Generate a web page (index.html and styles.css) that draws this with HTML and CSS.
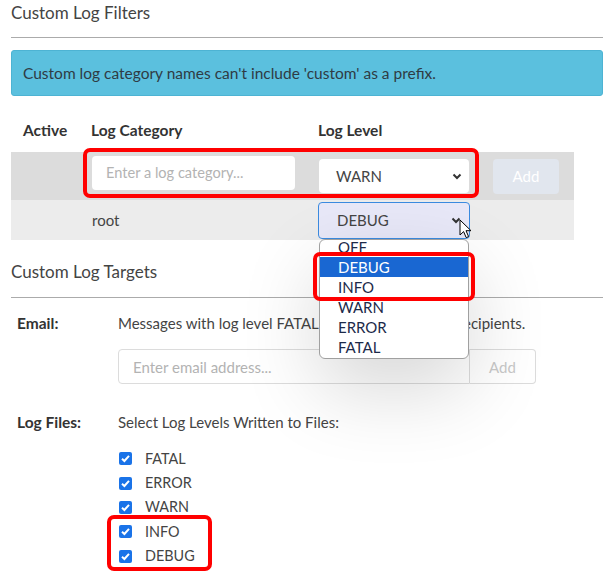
FILE: index.html
```html
<!DOCTYPE html>
<html>
<head>
<meta charset="utf-8">
<link rel="stylesheet" href="styles.css">
</head>
<body>
<div class="page">
  <div class="section-title">Custom Log Filters</div>
  <div class="alert">Custom log category names can't include 'custom' as a prefix.</div>

  <div class="filters">
    <div class="frow head">
      <div class="cell">Active</div>
      <div class="cell">Log Category</div>
      <div class="cell">Log Level</div>
      <div class="cell"></div>
    </div>
    <div class="frow new-row">
      <div class="cell"></div>
      <div class="cell"><div class="text-input">Enter a log category...</div></div>
      <div class="cell">
        <div class="select">
          <span>WARN</span>
          <svg class="chev" width="10" height="7" viewBox="0 0 10 7"><path d="M1.5 1.5 L5 5 L8.5 1.5" fill="none" stroke="#333" stroke-width="2"/></svg>
        </div>
      </div>
      <div class="cell"><div class="btn-add">Add</div></div>
    </div>
    <div class="frow existing">
      <div class="cell"></div>
      <div class="cell root">root</div>
      <div class="cell">
        <div class="select open">
          <span>DEBUG</span>
          <svg class="chev" width="10" height="7" viewBox="0 0 10 7"><path d="M1.5 1.5 L5 5 L8.5 1.5" fill="none" stroke="#333" stroke-width="2"/></svg>
          <div class="dropdown">
            <div class="options">
              <div class="opt">OFF</div>
              <div class="opt sel">DEBUG</div>
              <div class="opt">INFO</div>
              <div class="opt">WARN</div>
              <div class="opt">ERROR</div>
              <div class="opt">FATAL</div>
            </div>
          </div>
          <svg class="cursor" width="14" height="21" viewBox="0 0 14 21"><path d="M1 1 L1 16 L4.6 12.6 L7.2 18.6 L9.6 17.6 L7 11.7 L12 11.7 Z" fill="#fff" stroke="#000" stroke-width="1" stroke-linejoin="round"/></svg>
        </div>
      </div>
      <div class="cell"></div>
    </div>
  </div>

  <div class="section-title second">Custom Log Targets</div>

  <div class="targets">
    <div class="tlabel">Email:</div>
    <div class="tvalue">Messages with log level FATAL will be sent to these recipients.</div>
    <div class="tlabel"></div>
    <div class="tvalue">
      <div class="email-group">
        <div class="email-input">Enter email address...</div>
        <div class="email-add">Add</div>
      </div>
    </div>
    <div class="tlabel files">Log Files:</div>
    <div class="tvalue files">Select Log Levels Written to Files:</div>
    <div class="tlabel"></div>
    <div class="tvalue">
      <div class="checks">
        <div class="check"><span class="box"><svg width="13" height="13" viewBox="0 0 13 13"><path d="M3 6.8 L5.4 9 L10 3.8" fill="none" stroke="#fff" stroke-width="2"/></svg></span>FATAL</div>
        <div class="check"><span class="box"><svg width="13" height="13" viewBox="0 0 13 13"><path d="M3 6.8 L5.4 9 L10 3.8" fill="none" stroke="#fff" stroke-width="2"/></svg></span>ERROR</div>
        <div class="check"><span class="box"><svg width="13" height="13" viewBox="0 0 13 13"><path d="M3 6.8 L5.4 9 L10 3.8" fill="none" stroke="#fff" stroke-width="2"/></svg></span>WARN</div>
        <div class="check"><span class="box"><svg width="13" height="13" viewBox="0 0 13 13"><path d="M3 6.8 L5.4 9 L10 3.8" fill="none" stroke="#fff" stroke-width="2"/></svg></span>INFO</div>
        <div class="check"><span class="box"><svg width="13" height="13" viewBox="0 0 13 13"><path d="M3 6.8 L5.4 9 L10 3.8" fill="none" stroke="#fff" stroke-width="2"/></svg></span>DEBUG</div>
      </div>
    </div>
  </div>

  <div class="mark mark-row"></div>
  <div class="mark mark-opts"></div>
  <div class="mark mark-checks"></div>
</div>
</body>
</html>
```

FILE: styles.css
```css
html, body {
  margin: 0;
  padding: 0;
  background: #fff;
  overflow: hidden;
}
body {
  font-family: Lato, "Open Sans", sans-serif;
  font-size: 15px;
  color: #444;
  width: 603px;
  height: 573px;
}
.page {
  position: relative;
  padding-left: 11px;
  height: 573px;
}
.section-title {
  font-size: 17px;
  line-height: 22px;
  color: #444;
  padding-top: 2px;
  padding-bottom: 13px;
  border-bottom: 1px solid #ababab;
}
.section-title.second {
  margin-top: 21px;
  padding-top: 0;
  padding-bottom: 14px;
}
.alert {
  margin-top: 12px;
  height: 44px;
  display: flex;
  align-items: center;
  padding-left: 11px;
  background: #5bc0de;
  border: 1px solid #4db3d3;
  border-radius: 3px;
  color: #2f3b44;
  font-size: 15.5px;
}

/* filters table */
.filters {
  width: 563px;
}
.frow {
  display: grid;
  grid-template-columns: 69px 227px 174px 93px;
  align-items: center;
}
.frow .cell {
  padding-left: 12px;
}
.frow.head {
  padding-top: 24px;
  padding-bottom: 12px;
  line-height: 20px;
  font-weight: bold;
  font-size: 15.5px;
  color: #333;
}
.frow.head .cell:nth-child(2) { padding-left: 11px; }
.frow.head .cell:nth-child(3) { padding-left: 11px; }
.frow.new-row {
  background: #dcdcdc;
  height: 48px;
}
.frow.existing {
  background: #ececec;
  height: 40px;
}
.text-input {
  width: 203px;
  height: 34px;
  box-sizing: border-box;
  background: #fff;
  border-radius: 4px;
  padding-left: 14px;
  display: flex;
  align-items: center;
  color: #b3b3b3;
  font-size: 14.6px;
  margin-bottom: 7px;
}
.select {
  position: relative;
  width: 150px;
  height: 34px;
  box-sizing: border-box;
  background: #fff;
  border-radius: 4px;
  padding-left: 17px;
  display: flex;
  align-items: center;
  justify-content: space-between;
  padding-right: 7px;
  color: #444;
  font-size: 15px;
}
.select.open {
  height: 37px;
  width: 152px;
  margin-left: -1px;
  background: #e8e8f8;
  border: 1px solid #3b8be0;
  padding-left: 18px;
  padding-right: 8px;
}
.chev {
  display: block;
}
.btn-add {
  width: 66px;
  height: 35px;
  background: #e1e6ee;
  border-radius: 4px;
  color: #fff;
  display: flex;
  align-items: center;
  justify-content: center;
  font-size: 15px;
}
.root {
  color: #444;
}
.dropdown {
  position: absolute;
  left: 0;
  top: 36px;
  width: 150px;
  height: 120px;
  box-sizing: border-box;
  background: #fff;
  border: 1px solid #a0a0a0;
  border-radius: 6px;
  overflow: hidden;
  box-shadow: 0 30px 80px rgba(0, 0, 0, 0.16);
  z-index: 5;
}
.options {
  margin-top: -3px;
}
.opt {
  height: 20px;
  line-height: 20px;
  padding-left: 18px;
  color: #1c2a4a;
  font-size: 15px;
}
.opt.sel {
  background: #1967d2;
  color: #fff;
}
.cursor {
  position: absolute;
  left: 140px;
  top: 16px;
  z-index: 6;
}

/* targets */
.targets {
  display: grid;
  grid-template-columns: 107px 1fr;
  margin-top: 15px;
  line-height: 20px;
}
.tlabel {
  padding-left: 6px;
  font-weight: bold;
  font-size: 15.5px;
  color: #333;
}
.tvalue {
  color: #444;
  white-space: nowrap;
}
.tlabel.files, .tvalue.files {
  margin-top: 28px;
}
.email-group {
  display: flex;
  margin-top: 16px;
  height: 35px;
}
.email-input {
  width: 352px;
  box-sizing: border-box;
  border: 1px solid #dcdcdc;
  border-radius: 4px 0 0 4px;
  padding-left: 14px;
  display: flex;
  align-items: center;
  color: #b3b3b3;
}
.email-add {
  width: 66px;
  box-sizing: border-box;
  border: 1px solid #dcdcdc;
  border-left: none;
  border-radius: 0 4px 4px 0;
  display: flex;
  align-items: center;
  justify-content: center;
  color: #c8c8c8;
  font-size: 15px;
}
.checks {
  margin-top: 14.5px;
}
.check {
  height: 24.4px;
  display: flex;
  align-items: center;
  font-size: 14.4px;
  color: #444;
}
.box {
  width: 13px;
  height: 13px;
  margin-left: 1px;
  margin-right: 13px;
  border-radius: 2px;
  background: #1a73e8;
  display: flex;
}

/* annotation boxes */
.mark {
  position: absolute;
  border: 4px solid #ff0000;
  border-radius: 7px;
  box-sizing: border-box;
  z-index: 10;
}
.mark-row {
  left: 83px;
  top: 148px;
  width: 396px;
  height: 50px;
}
.mark-opts {
  left: 313px;
  top: 252px;
  width: 162px;
  height: 49px;
}
.mark-checks {
  left: 107px;
  top: 515px;
  width: 105px;
  height: 56px;
}
```
